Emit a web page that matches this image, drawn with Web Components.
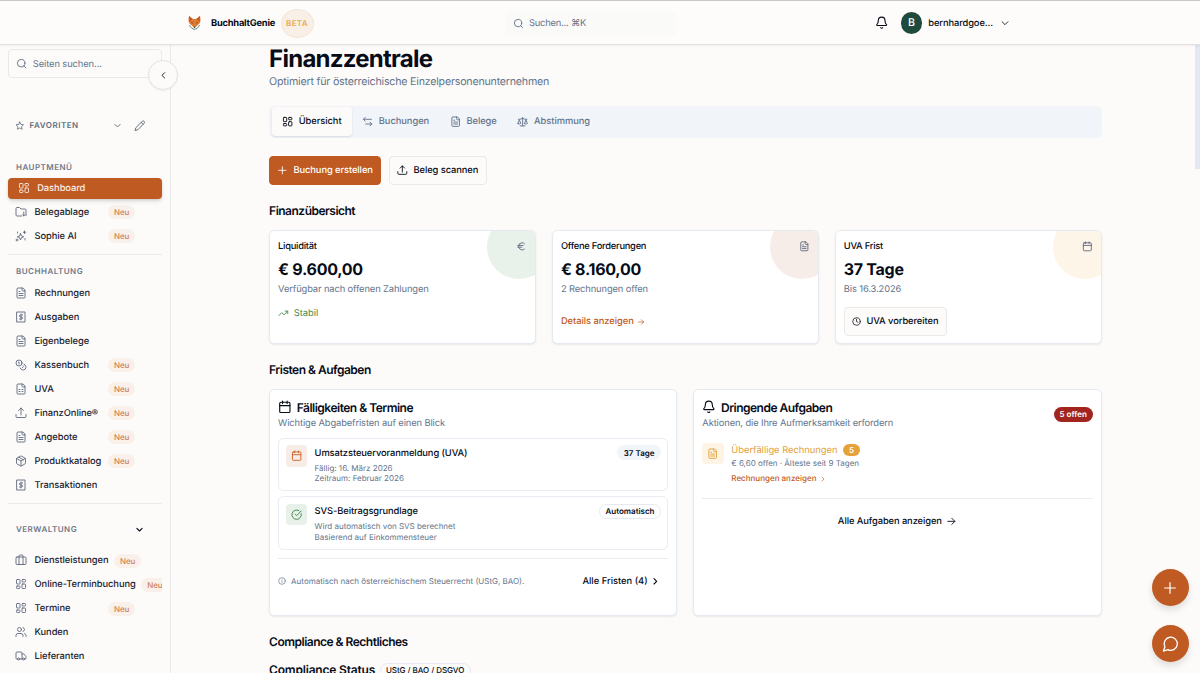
<!DOCTYPE html>
<html lang="de">
<head>
<meta charset="utf-8">
<title>BuchhaltGenie</title>
<style>
	:root {
		--brand: #bf5a22;
		--ink: #070c18;
		--muted: #64748b;
		--line: #e6eaf0;
		--paper: #fdfbf9;
	}
	body {
		margin: 0;
		width: 1200px;
		height: 673px;
		overflow: hidden;
		background: var(--paper);
		color: var(--ink);
		font-family: Inter, "Liberation Sans", "DejaVu Sans", sans-serif;
		font-size: 9.33px;
		line-height: 13.33px;
		text-rendering: geometricPrecision;
	}
</style>
</head>
<body>
<genie-app></genie-app>

<script>
const ICONS = {
	dashboard: `<rect x="3" y="3" width="7" height="9" rx="1.5"/><rect x="14" y="3" width="7" height="5" rx="1.5"/><rect x="14" y="12" width="7" height="9" rx="1.5"/><rect x="3" y="16" width="7" height="5" rx="1.5"/>`,
	folder: `<path d="M13 20H4a2 2 0 0 1-2-2V5a2 2 0 0 1 2-2h5l3 3h8a2 2 0 0 1 2 2v11"/><path d="M17.500 12v8M15 17.500l2.500 2.500 2.500-2.500"/>`,
	sparkles: `<path d="M11 7l1.800 4.700L17.500 13.500l-4.700 1.800L11 20l-1.800-4.700L4.500 13.500l4.700-1.800Z"/><path d="M19 2v5M16.500 4.500h5M4 18v4M2 20h4M20 17v3M5 4v2"/>`,
	file: `<path d="M15 2H6a2 2 0 0 0-2 2v16a2 2 0 0 0 2 2h12a2 2 0 0 0 2-2V7Z"/><path d="M14 2v4a2 2 0 0 0 2 2h4M10 9H8M16 13H8M16 17H8"/>`,
	receipt: `<path d="M4 2h16v20H4Z"/><path d="M15 8h-4a2 2 0 0 0 0 4h2a2 2 0 0 1 0 4H9M12 6v12"/>`,
	coins: `<circle cx="8" cy="8" r="6"/><path d="M18.090 10.370A6 6 0 1 1 10.340 18M7 6h1v4M16.710 13.880l.7.710-2.820 2.820"/>`,
	sheet: `<path d="M15 2H6a2 2 0 0 0-2 2v16a2 2 0 0 0 2 2h12a2 2 0 0 0 2-2V7Z"/><path d="M14 2v4a2 2 0 0 0 2 2h4M8 13h2M14 13h2M8 17h2M14 17h2"/>`,
	upload: `<path d="M22 15v4a2 2 0 0 1-2 2H4a2 2 0 0 1-2-2v-4M17 7l-5-5-5 5M12 2v14"/>`,
	box: `<path d="M21 8a2 2 0 0 0-1-1.730l-7-4a2 2 0 0 0-2 0l-7 4A2 2 0 0 0 3 8v8a2 2 0 0 0 1 1.730l7 4a2 2 0 0 0 2 0l7-4A2 2 0 0 0 21 16Z"/><path d="M3.300 7 12 12l8.700-5M12 22V12M7.500 4.300l9 5.150"/>`,
	luggage: `<rect x="2" y="6" width="20" height="15" rx="2"/><path d="M8 21V4a2 2 0 0 1 2-2h4a2 2 0 0 1 2 2v17"/>`,
	users: `<path d="M16 21v-2a4 4 0 0 0-4-4H6a4 4 0 0 0-4 4v2"/><circle cx="9" cy="7" r="4"/><path d="M22 21v-2a4 4 0 0 0-3-3.870M16 3.130a4 4 0 0 1 0 7.750"/>`,
	truck: `<path d="M14 18V6a2 2 0 0 0-2-2H4a2 2 0 0 0-2 2v11a1 1 0 0 0 1 1h2M15 18H9M19 18h2a1 1 0 0 0 1-1v-3.650a1 1 0 0 0-.220-.624l-3.480-4.350A1 1 0 0 0 17.520 8H14"/><circle cx="17" cy="18" r="2"/><circle cx="7" cy="18" r="2"/>`,
	swap: `<path d="M7 3 3 7l4 4M3 7h17M17 13l4 4-4 4M21 17H8"/>`,
	scale: `<path d="m16 16 3-8 3 8c-.87.650-1.920 1-3 1s-2.130-.350-3-1ZM2 16l3-8 3 8c-.87.650-1.920 1-3 1s-2.130-.350-3-1ZM7 21h10M12 3v18M3 7h2c2 0 5-1 7-2 2 1 5 2 7 2h2"/>`,
	calendar: `<rect x="3" y="4" width="18" height="18" rx="2"/><path d="M8 2v4M16 2v4M3 10h18"/>`,
	check: `<path d="M21.800 10A10 10 0 1 1 17 3.340M9 11l3 3L22 4"/>`,
	clock: `<circle cx="12" cy="12" r="10"/><path d="M12 6v6l4 2"/>`,
	bell: `<path d="M10.270 21a2 2 0 0 0 3.460 0M3.260 15.330A1 1 0 0 0 4 17h16a1 1 0 0 0 .740-1.670C19.410 13.960 18 12.500 18 8A6 6 0 0 0 6 8c0 4.500-1.410 5.960-2.740 7.330Z"/>`,
	info: `<circle cx="12" cy="12" r="10"/><path d="M12 16v-4M12 8h.010"/>`,
	trend: `<path d="m22 7-8.500 8.500-5-5L2 17M16 7h6v6"/>`,
	down: `<path d="m5 9 7 7 7-7"/>`,
	left: `<path d="m15 18-6-6 6-6"/>`,
	right: `<path d="m9 18 6-6-6-6"/>`,
	arrow: `<path d="M4 12h16M13 5l7 7-7 7"/>`,
	star: `<path d="m12 2.500 2.900 6.100 6.600.900-4.800 4.600 1.200 6.700L12 17.600l-5.900 3.200 1.200-6.700L2.500 9.500l6.600-.900Z"/>`,
	pencil: `<path d="M21.170 6.810a2.800 2.800 0 0 0-3.980-3.980L3.840 16.170 2 22l5.830-1.840ZM15 5l4 4"/>`,
	search: `<circle cx="11" cy="11" r="8"/><path d="m21 21-4.300-4.300"/>`,
	chat: `<path d="M7.900 20A9 9 0 1 0 4 16.100L2 22Z"/>`,
	plus: `<path d="M4 12h16M12 4v16"/>`,
	euro: `<path d="M4 10h12M4 14h9M19 6a7.700 7.700 0 0 0-5.200-2A7.900 7.900 0 0 0 6 12c0 4.400 3.500 8 7.800 8 2 0 3.800-.8 5.200-2"/>`,
};

// shared by every element: attach an open root and fill it
class GenieElement extends HTMLElement {
	connectedCallback() {
		if (this.shadowRoot) return;
		this.attachShadow({ mode: "open" });
		const template = document.createElement("template");
		template.innerHTML = `<style>:host { box-sizing: border-box } ${this.css()}</style>${this.html()}`;
		this.shadowRoot.appendChild(template.content.cloneNode(true));
	}
	attr(name, fallback = "") {
		return this.getAttribute(name) || fallback;
	}
}

class GenieIcon extends GenieElement {
	css() {
		const size = this.attr("size", "10.67");
		return /*css*/ `
			:host { display: block; flex: none; width: ${size}px; height: ${size}px }
			svg { display: block; width: 100%; height: 100% }
		`;
	}
	html() {
		return `<svg viewBox="0 0 24 24" fill="none" stroke="currentColor" stroke-width="${this.attr("weight", "2")}" stroke-linecap="round" stroke-linejoin="round">${ICONS[this.attr("name")]}</svg>`;
	}
}

class GenieLogo extends GenieElement {
	css() {
		return /*css*/ `:host { display: block; width: 15px; height: 16px } svg { display: block }`;
	}
	html() {
		return `
		<svg width="15" height="16" viewBox="0 0 30 32">
			<path d="M5 20c2 5 6 8.500 10 8.500s8-3.500 10-8.500" fill="#fff" stroke="#4b767b" stroke-width="1.800"/>
			<path d="M4 2l8 6h6l8-6c1.500 6 1.500 11-1 15l-10 9L5 17C2.500 13 2.500 8 4 2Z" fill="#e07a32"/>
			<path d="M4 2l7 6-6 6Z" fill="#c25a22"/>
			<path d="M26 2l-7 6 6 6Z" fill="#c25a22"/>
			<path d="M8 14l5 2-3 1ZM22 14l-5 2 3 1Z" fill="#8a3d1a"/>
			<path d="M13 23.500h4L15 26Z" fill="#2c2522"/>
		</svg>`;
	}
}

class GeniePill extends GenieElement {
	css() {
		return /*css*/ `
			:host {
				display: inline-flex; align-items: center; flex: none;
				height: 14.67px; padding: 0 5.33px; border-radius: 8px;
				border: 0.67px solid transparent;
				font-size: 8px; font-weight: 600; line-height: 1;
			}
			:host([tone="new"]) { background: #f9f0ea; color: #d08256; font-weight: 500; padding: 0 6px; height: 14px; border: 0 }
			:host([tone="grey"]) { background: #f1f5f9 }
			:host([tone="outline"]) { border-color: var(--line) }
			:host([tone="plain"]) { border-color: var(--line); font-weight: 500; letter-spacing: -.006em }
			:host([tone="red"]) { background: #a1241f; color: #fff; padding: 0 4.800px }
			:host([tone="amber"]) { background: #e5a23a; color: #fff; height: 12.5px; padding: 0 5.200px }
		`;
	}
	html() {
		return `<slot></slot>`;
	}
}

class GenieButton extends GenieElement {
	css() {
		return /*css*/ `
			:host {
				display: inline-flex; align-items: center; gap: 5.33px;
				height: 29.33px; padding: 1.300px 7.33px 0; border-radius: 4px;
				border: 1px solid #ebe9e8; background: var(--paper);
				font-weight: 500; letter-spacing: -.008em; white-space: nowrap;
			}
			:host([primary]) { background: var(--brand); border-color: var(--brand); color: #fff }
			genie-icon { margin-top: -1px }
		`;
	}
	html() {
		return `<genie-icon name="${this.attr("icon")}" size="${this.attr("size", "10.67")}"></genie-icon><slot></slot>`;
	}
}

class GenieHeader extends GenieElement {
	css() {
		return /*css*/ `
			:host {
				display: grid; grid-template-columns: 318px 1fr auto; align-items: center;
				height: 44.500px; padding: 1.500px 190px 0 187px;
				border-top: 1.5px solid #c9c8c7; border-bottom: 1px solid #e2e1e0;
				background: #fefcfa; box-shadow: 0 1px 2px #0000000d;
				position: relative; z-index: 2; letter-spacing: -.01em;
			}
			.brand { display: flex; align-items: center }
			b { margin: 0 5.500px 0 9px; padding-top: 1px; font-size: 9.33px; font-weight: 700; letter-spacing: -.025em }
			.beta {
				display: grid; place-items: center; box-sizing: border-box; width: 33px; height: 29px;
				border: .67px solid #f3e6d8; border-radius: 50%; padding-top: .5px;
				background: #f8efe6; color: #e8a94e;
				font-size: 8px; font-weight: 600; letter-spacing: .04em;
			}
			.search {
				display: flex; align-items: center; gap: 5px; width: 162.500px; height: 25px;
				padding-left: 8px; border-radius: 4px; background: #fafaf8; color: var(--muted);
				letter-spacing: -.022em;
			}
			.search span { padding-top: 1px }
			.user { display: flex; align-items: center; font-weight: 500 }
			.name { padding-top: 1px }
			.avatar {
				display: grid; place-items: center; width: 21.33px; height: 21.33px;
				margin: 0 6px 0 13px; border-radius: 50%; background: #1f4a3d; color: #fff; font-size: 10.67px;
			}
			.user genie-icon:last-child { margin-left: 7px }
		`;
	}
	html() {
		return `
		<div class="brand"><genie-logo></genie-logo><b>BuchhaltGenie</b><span class="beta">BETA</span></div>
		<div class="search"><genie-icon name="search" size="11"></genie-icon><span>Suchen... ⌘K</span></div>
		<div class="user">
			<genie-icon name="bell" size="13.33"></genie-icon>
			<span class="avatar">B</span>
			<span class="name">bernhardgoe...</span>
			<genie-icon name="down" size="10" weight="2"></genie-icon>
		</div>`;
	}
}

class GenieNavItem extends GenieElement {
	css() {
		return /*css*/ `
			:host {
				display: flex; align-items: center; gap: 5.500px; height: 24px;
				padding-left: 7.300px; overflow: hidden; white-space: nowrap;
				font-weight: 500; letter-spacing: -.006em; color: #1b2230;
			}
			:host([active]) {
				height: 21.500px; margin-bottom: 1px; padding-left: 10px; border-radius: 4px; overflow: visible;
				background: var(--brand); color: #fdeee4;
				box-shadow: 0 3px 5px -1px #0000001f, 0 1px 3px #0000001a;
			}
			genie-icon { color: #5d687e; margin: -1px 1.700px 0 0 }
			genie-pill { margin-top: -.5px }
			:host([active]) genie-icon { color: inherit }
			.label { flex: none; min-width: 68px }
		`;
	}
	html() {
		const badge = this.hasAttribute("new") ? `<genie-pill tone="new">Neu</genie-pill>` : "";
		return `<genie-icon name="${this.attr("icon")}" size="12" weight="1.8"></genie-icon><span class="label"><slot></slot></span>${badge}`;
	}
}

class GenieNavGroup extends GenieElement {
	css() {
		return /*css*/ `
			:host { display: block; border-bottom: 1px solid #ebeae9 }
			:host([last]) { border: 0 }
			.head {
				display: flex; align-items: center; height: 12px; padding: 0 18px 0 8px;
				font-size: 8px; font-weight: 600; letter-spacing: .06em; color: #6b7688;
			}
			.head span { flex: 1 }
			.head genie-icon { color: var(--ink) }
		`;
	}
	html() {
		const chevron = this.hasAttribute("open") ? `<genie-icon name="down" size="9" weight="3"></genie-icon>` : "";
		return `<div class="head"><span>${this.attr("heading")}</span>${chevron}</div><slot></slot>`;
	}
}

class GenieSidebar extends GenieElement {
	css() {
		return /*css*/ `
			:host {
				display: block; position: relative; width: 171px; height: 629px;
				padding: 5px 8px 0; border-right: 1px solid #e9e8e7;
			}
			.search {
				display: flex; align-items: center; gap: 5.500px; box-sizing: border-box; height: 29.33px;
				padding: .6px 0 0 7px; border: 1px solid #ebe9e8; border-radius: 4px; color: var(--muted);
				letter-spacing: -.01em;
			}
			.search span { padding-top: 1.500px }
			/* round handle sits over the sidebar edge */
			.collapse {
				position: absolute; left: 148px; top: 16px; display: grid; place-items: center;
				width: 28px; height: 28px; border: 1px solid #e4e3e2; border-radius: 50%;
				background: var(--paper); box-shadow: 0 1px 2px #0000000d;
			}
			.fav {
				display: flex; align-items: center; height: 16px; margin: 39.500px 0 28px; padding: 0 17px 0 7px;
				color: #5f6a7c; font-size: 8px; font-weight: 600; letter-spacing: .065em;
			}
			.fav span { flex: 1; margin-left: 5px }
			.fav genie-icon:last-child { margin-left: 12px }
			.main { padding-bottom: 6px; margin-bottom: 10.500px }
			.gap { height: 4px }
			.books { padding-bottom: 6px; margin-bottom: 19.500px }
			.books .gap { height: 3.500px }
		`;
	}
	html() {
		return `
		<div class="search"><genie-icon name="search" size="11.3"></genie-icon><span>Seiten suchen...</span></div>
		<div class="collapse"><genie-icon name="left"></genie-icon></div>
		<div class="fav">
			<genie-icon name="star" size="9.5"></genie-icon><span>FAVORITEN</span>
			<genie-icon name="down" size="9" weight="2.5"></genie-icon><genie-icon name="pencil" size="11.5"></genie-icon>
		</div>
		<genie-nav-group class="main" heading="HAUPTMENÜ">
			<div class="gap"></div>
			<genie-nav-item icon="dashboard" active>Dashboard</genie-nav-item>
			<genie-nav-item icon="folder" new>Belegablage</genie-nav-item>
			<genie-nav-item icon="sparkles" new>Sophie AI</genie-nav-item>
		</genie-nav-group>
		<genie-nav-group class="books" heading="BUCHHALTUNG">
			<div class="gap"></div>
			<genie-nav-item icon="file">Rechnungen</genie-nav-item>
			<genie-nav-item icon="receipt">Ausgaben</genie-nav-item>
			<genie-nav-item icon="file">Eigenbelege</genie-nav-item>
			<genie-nav-item icon="coins" new>Kassenbuch</genie-nav-item>
			<genie-nav-item icon="sheet" new>UVA</genie-nav-item>
			<genie-nav-item icon="upload" new>FinanzOnline®</genie-nav-item>
			<genie-nav-item icon="file" new>Angebote</genie-nav-item>
			<genie-nav-item icon="box" new>Produktkatalog</genie-nav-item>
			<genie-nav-item icon="receipt">Transaktionen</genie-nav-item>
		</genie-nav-group>
		<genie-nav-group last open heading="VERWALTUNG">
			<div class="gap" style="height: 13px"></div>
			<genie-nav-item icon="luggage" new>Dienstleistungen</genie-nav-item>
			<genie-nav-item icon="dashboard" new>Online-Terminbuchung</genie-nav-item>
			<genie-nav-item icon="dashboard" new>Termine</genie-nav-item>
			<genie-nav-item icon="users">Kunden</genie-nav-item>
			<genie-nav-item icon="truck">Lieferanten</genie-nav-item>
		</genie-nav-group>`;
	}
}

class GenieTab extends GenieElement {
	css() {
		return /*css*/ `
			:host {
				display: flex; align-items: center; gap: 5.33px; height: 28.67px; padding: 1.300px 10.33px 0;
				border-radius: 4px; color: var(--muted); font-weight: 500; letter-spacing: -.006em;
			}
			:host([active]) { background: var(--paper); color: var(--ink); box-shadow: 0 1px 2px #0000001c }
			genie-icon { margin-top: -1px }
		`;
	}
	html() {
		return `<genie-icon name="${this.attr("icon")}" size="11.3"></genie-icon><slot></slot>`;
	}
}

class GenieStat extends GenieElement {
	css() {
		return /*css*/ `
			:host {
				display: block; position: relative; overflow: hidden; height: 114px; padding: 8.600px 8px 8px;
				border: 1px solid var(--line); border-radius: 5.33px; background: #fff;
				box-shadow: 0 1px 2px #00000014;
			}
			.blob {
				position: absolute; top: -16.500px; right: -16px; width: 64px; height: 64px;
				border-radius: 50%; background: var(--blob);
			}
			.top { display: flex; justify-content: space-between; align-items: center; height: 13.33px; font-weight: 500; letter-spacing: -.027em }
			.top span { padding-top: 1px }
			.top genie-icon { position: relative; color: #5d687e }
			.value { margin-top: 6px; font-size: 16px; line-height: 21px; font-weight: 700; letter-spacing: -.017em }
			.sub { margin-top: 3px; color: var(--muted); letter-spacing: -.012em }
			::slotted(*) { margin-top: 10.33px }
		`;
	}
	html() {
		return `
		<div class="blob"></div>
		<div class="top"><span>${this.attr("label")}</span><genie-icon name="${this.attr("icon")}"></genie-icon></div>
		<div class="value">${this.attr("value")}</div>
		<div class="sub">${this.attr("sub")}</div>
		<slot></slot>`;
	}
}

class GeniePanel extends GenieElement {
	css() {
		return /*css*/ `
			:host {
				display: block; height: 227px; padding: 9.600px 8px;
				border: 1px solid var(--line); border-radius: 5.33px; background: #fff;
				box-shadow: 0 1px 2px #00000014;
			}
			header { display: flex; align-items: center; justify-content: space-between; height: 31px }
			h3 {
				display: flex; align-items: center; gap: 5px; margin: 0 0 1.400px;
				font-size: 12px; line-height: 16px; font-weight: 600; letter-spacing: -.042em;
			}
			h3 genie-icon { margin-top: -1px }
			p { margin: 0; color: var(--muted); letter-spacing: -.012em }
			::slotted(genie-pill) { margin-top: -1px }
		`;
	}
	html() {
		return `
		<header>
			<div>
				<h3><genie-icon name="${this.attr("icon")}" size="13.67"></genie-icon><span>${this.attr("heading")}</span></h3>
				<p>${this.attr("sub")}</p>
			</div>
			<slot name="badge"></slot>
		</header>
		<slot></slot>`;
	}
}

class GenieTile extends GenieElement {
	css() {
		return /*css*/ `
			:host {
				display: grid; place-items: center; flex: none; width: 21.33px; height: 21.33px;
				border-radius: 4px; background: var(--tile); color: var(--tile-ink);
			}
		`;
	}
	html() {
		return `<genie-icon name="${this.attr("icon")}" size="11.3"></genie-icon>`;
	}
}

class GenieDeadline extends GenieElement {
	css() {
		return /*css*/ `
			:host {
				display: flex; align-items: flex-start; height: 53.33px; padding: 6.500px; margin-bottom: 5.33px;
				border: 1px solid #e8ecf2; border-radius: 5.33px;
			}
			.text { flex: 1; margin-left: 7.67px; font-size: 8px; line-height: 10.67px; color: var(--muted) }
			.name { margin: 1.500px 0 2.500px; font-size: 9.33px; line-height: 13.33px; font-weight: 500; letter-spacing: -.009em; color: var(--ink) }
		`;
	}
	html() {
		return `
		<genie-tile icon="${this.attr("icon")}"></genie-tile>
		<div class="text"><div class="name">${this.attr("name")}</div><slot></slot></div>
		<genie-pill tone="${this.attr("tone")}">${this.attr("badge")}</genie-pill>`;
	}
}

class GenieFab extends GenieElement {
	css() {
		return /*css*/ `
			:host {
				display: grid; place-items: center; width: 37.33px; height: 37.33px; border-radius: 50%;
				background: var(--brand); color: #fff; box-shadow: 0 4px 7px #0000001f;
			}
		`;
	}
	html() {
		return `<genie-icon name="${this.attr("icon")}" size="${this.attr("size", "16")}" weight="1.8"></genie-icon>`;
	}
}

class GenieDashboard extends GenieElement {
	css() {
		return /*css*/ `
			:host { display: block; width: 832.500px; margin-left: 98.100px }
			h1 { margin: 0; font-size: 24px; line-height: 29px; font-weight: 700; letter-spacing: -.031em }
			.lead { margin: .5px 0 16px; font-size: 10.67px; line-height: 16px; color: var(--muted); letter-spacing: -.02em }
			h2 { margin: 0; font-size: 12px; line-height: 18px; font-weight: 600; letter-spacing: -.042em }
			.tabs { display: flex; align-items: center; box-sizing: border-box; height: 32px; padding: 0 2.67px; border-radius: 5.33px; background: #f1f5fa }
			.actions { display: flex; gap: 8px; margin: 18px 0 17px }
			.stats { display: grid; grid-template-columns: repeat(3, 1fr); gap: 16px; margin: 10.200px 0 16.800px }
			.panels { display: grid; grid-template-columns: 1fr 1fr; gap: 16px; margin: 10px 0 17px }
			.good { display: flex; align-items: center; gap: 5px; color: #3f8a4b }
			.link { display: flex; align-items: center; gap: 3px; color: var(--brand); font-weight: 500; letter-spacing: -.005em }
			.rule { height: 1px; background: #e9edf2 }
			.foot { display: flex; align-items: center; justify-content: space-between; margin-top: 16px; font-size: 8px; color: var(--muted) }
			.foot > span { display: flex; align-items: center; gap: 5px }
			.foot .all { gap: 2.500px; margin-right: 7.500px; font-size: 9.33px; font-weight: 500; color: var(--ink) }
			.task { display: flex; align-items: flex-start; margin: 12.500px 0 13px }
			.task .body { margin-left: 7.67px; font-size: 8px; color: var(--muted) }
			.task .name { display: flex; align-items: center; gap: 5.33px; margin-top: .8px; font-size: 9.33px; color: #e3a03a }
			.task .name genie-pill { margin-top: -1px }
			.task .link { margin-top: 1.500px; letter-spacing: 0 }
			.more { display: flex; align-items: center; justify-content: center; gap: 4.500px; margin-top: 16.300px; font-weight: 500; letter-spacing: -.009em }
			.more genie-icon { margin-top: -1px }
			.status { display: flex; align-items: center; gap: 4.500px; margin-top: 10.500px }
			.status h2 { letter-spacing: -.016em }
		`;
	}
	html() {
		return `
		<h1>Finanzzentrale</h1>
		<p class="lead"><span>Optimiert für österreichische Einzelpersonenunternehmen</span></p>
		<div class="tabs">
			<genie-tab icon="dashboard" active>Übersicht</genie-tab>
			<genie-tab icon="swap">Buchungen</genie-tab>
			<genie-tab icon="file">Belege</genie-tab>
			<genie-tab icon="scale">Abstimmung</genie-tab>
		</div>
		<div class="actions">
			<genie-button primary icon="plus">Buchung erstellen</genie-button>
			<genie-button icon="upload">Beleg scannen</genie-button>
		</div>
		<h2>Finanzübersicht</h2>
		<div class="stats">
			<genie-stat style="--blob: #e9f1eb" icon="euro" label="Liquidität" value="€ 9.600,00" sub="Verfügbar nach offenen Zahlungen">
				<div class="good"><genie-icon name="trend"></genie-icon><span>Stabil</span></div>
			</genie-stat>
			<genie-stat style="--blob: #f7ede8" icon="file" label="Offene Forderungen" value="€ 8.160,00" sub="2 Rechnungen offen">
				<div class="link" style="margin-top: 18.67px"><span>Details anzeigen</span><genie-icon name="arrow" size="8"></genie-icon></div>
			</genie-stat>
			<genie-stat style="--blob: #fdf5e8" icon="calendar" label="UVA Frist" value="37 Tage" sub="Bis 16.3.2026">
				<genie-button icon="clock" size="9">UVA vorbereiten</genie-button>
			</genie-stat>
		</div>
		<h2>Fristen &amp; Aufgaben</h2>
		<div class="panels">
			<genie-panel icon="calendar" heading="Fälligkeiten &amp; Termine" sub="Wichtige Abgabefristen auf einen Blick">
				<div style="height: 7.400px"></div>
				<genie-deadline style="--tile: #f8ece6; --tile-ink: #c9662f" icon="calendar" name="Umsatzsteuervoranmeldung (UVA)" tone="grey" badge="37 Tage">
					<div>Fällig: 16. März 2026</div><div>Zeitraum: Februar 2026</div>
				</genie-deadline>
				<genie-deadline style="--tile: #e7f0e9; --tile-ink: #3f8a4b" icon="check" name="SVS-Beitragsgrundlage" tone="outline" badge="Automatisch">
					<div>Wird automatisch von SVS berechnet</div><div>Basierend auf Einkommensteuer</div>
				</genie-deadline>
				<div class="rule" style="margin-top: 8px"></div>
				<div class="foot">
					<span><genie-icon name="info" size="8"></genie-icon>Automatisch nach österreichischem Steuerrecht (UStG, BAO).</span>
					<span class="all">Alle Fristen (4)<genie-icon name="right" weight="2.500"></genie-icon></span>
				</div>
			</genie-panel>
			<genie-panel icon="bell" heading="Dringende Aufgaben" sub="Aktionen, die Ihre Aufmerksamkeit erfordern">
				<genie-pill slot="badge" tone="red">5 offen</genie-pill>
				<div class="task">
					<genie-tile style="--tile: #fdf4e6; --tile-ink: #e5a23a" icon="file"></genie-tile>
					<div class="body">
						<div class="name"><span>Überfällige Rechnungen</span><genie-pill tone="amber">5</genie-pill></div>
						<div><span>€ 6,60 offen · Älteste seit 9 Tagen</span></div>
						<div class="link"><span>Rechnungen anzeigen</span><genie-icon name="right" size="8"></genie-icon></div>
					</div>
				</div>
				<div class="rule"></div>
				<div class="more"><span>Alle Aufgaben anzeigen</span><genie-icon name="arrow"></genie-icon></div>
			</genie-panel>
		</div>
		<h2>Compliance &amp; Rechtliches</h2>
		<div class="status"><h2>Compliance Status</h2><genie-pill tone="plain">UStG / BAO / DSGVO</genie-pill></div>`;
	}
}

class GenieApp extends GenieElement {
	css() {
		return /*css*/ `
			:host { display: block; position: relative; width: 1200px; height: 673px; overflow: hidden }
			.body { display: flex; height: 629px; margin-top: -.5px }
			.scrollbar { position: absolute; right: 0; top: 44px; width: 5px; height: 125px; background: #e2e8f0 }
			/* floating actions stay above the page */
			.fabs { position: absolute; left: 1151.800px; top: 569px; display: grid; gap: 18.67px }
		`;
	}
	html() {
		return `
		<genie-header></genie-header>
		<div class="body"><genie-sidebar></genie-sidebar><genie-dashboard></genie-dashboard></div>
		<div class="scrollbar"></div>
		<div class="fabs"><genie-fab icon="plus"></genie-fab><genie-fab icon="chat" size="17.5"></genie-fab></div>`;
	}
}

customElements.define("genie-icon", GenieIcon);
customElements.define("genie-logo", GenieLogo);
customElements.define("genie-pill", GeniePill);
customElements.define("genie-button", GenieButton);
customElements.define("genie-header", GenieHeader);
customElements.define("genie-nav-item", GenieNavItem);
customElements.define("genie-nav-group", GenieNavGroup);
customElements.define("genie-sidebar", GenieSidebar);
customElements.define("genie-tab", GenieTab);
customElements.define("genie-stat", GenieStat);
customElements.define("genie-panel", GeniePanel);
customElements.define("genie-tile", GenieTile);
customElements.define("genie-deadline", GenieDeadline);
customElements.define("genie-fab", GenieFab);
customElements.define("genie-dashboard", GenieDashboard);
customElements.define("genie-app", GenieApp);
</script>
</body>
</html>
